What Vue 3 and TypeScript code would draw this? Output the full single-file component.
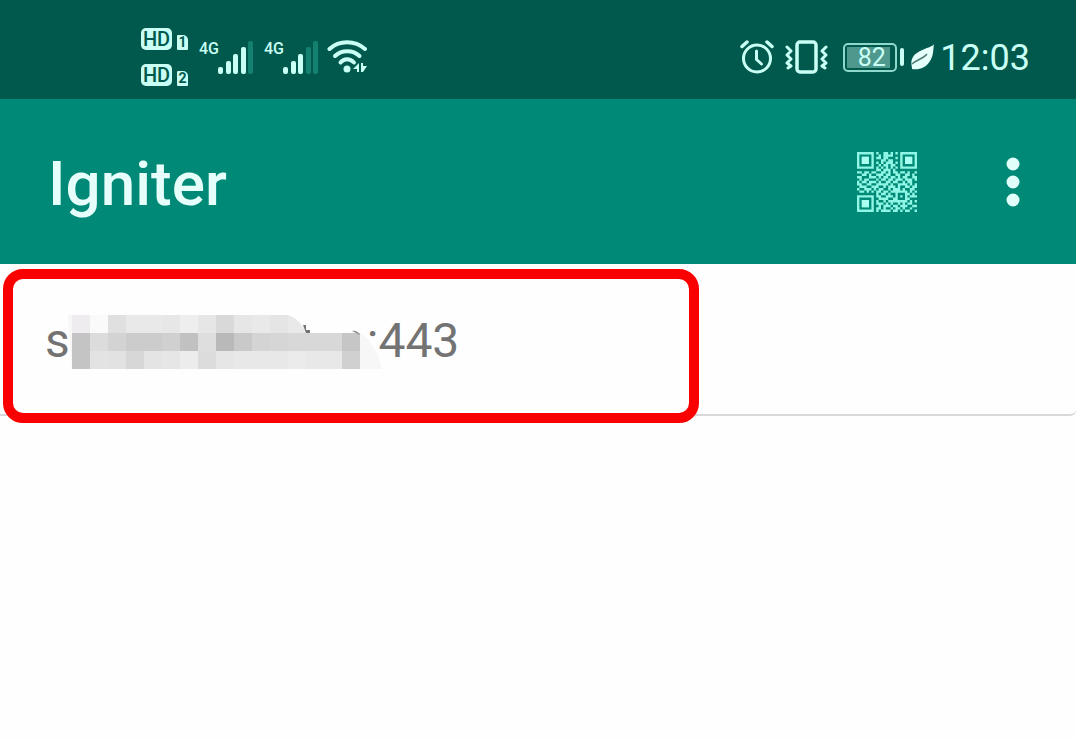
<script setup lang="ts">
interface Cell {
  x: number
  y: number
  fill: string
}

const sims: number[] = [1, 2]

const networks = [
  { id: 1, strength: 4 },
  { id: 2, strength: 3 },
]

const signalBars = [
  { x: 0, h: 7 },
  { x: 8, h: 13 },
  { x: 15, h: 20 },
  { x: 23, h: 27 },
  { x: 30, h: 33 },
]

const qrRows: string[] = [
  '1111111010011010101111111',
  '1000001001011110001000001',
  '1011101011011000101011101',
  '1011101000110110001011101',
  '1011101010101110101011101',
  '1000001001011011001000001',
  '1111111010101010101111111',
  '0000000011011101000000000',
  '1101101100110101101101001',
  '0011010011101100110011010',
  '1100011101011011010110011',
  '0101100010110110111011101',
  '1011011101001101100101100',
  '1100110011111010011110101',
  '0111001110010111010011011',
  '1001110101100101110100110',
  '0110101011011011111110101',
  '0000000010110100100011010',
  '1111111011001110101010111',
  '1000001001111001100011000',
  '1011101010010111111110101',
  '1011101011101010010101100',
  '1011101001011101101110011',
  '1000001011010010110100100',
  '1111111010111101101011001',
]

const qrPath: string = qrRows
  .map((row, y) =>
    [...row].map((bit, x) => (bit === '1' ? `M${x} ${y}h1v1h-1z` : '')).join(''),
  )
  .join('')

const shades: string[][] = [
  ['eeecee', 'fafafa', 'e0e0e0', 'e9e9e9', 'e9e9e9', 'e7e7e7', 'eeeeee', 'e6e6e6', 'd9d9d9', 'e6e6e6', 'e9e9e9', 'e5e5e5'],
  ['c4c4c4', 'dcdcdc', 'd3d3d3', 'cccccc', 'cccccc', 'd0d0d0', 'c1c1c1', 'dedede', 'b9b9b9', 'c9c9c9', 'd4d4d4', 'd6d6d6', 'd8d8d8', 'd8d8d8', 'd8d8d8', 'c6c6c6'],
  ['c4c4c4', 'e3e3e3', 'e2e2e2', 'd7d7d7', 'e4e4e4', 'e6e6e6', 'ececec', 'dcdcdc', 'e6e6e6', 'e8e8e8', 'e8e8e8', 'e8e8e8', 'ebebeb', 'e8e8e8', 'e8e8e8', 'd0d0d0'],
]

const cells: Cell[] = shades.flatMap((row, r) =>
  row.map((shade, c) => ({ x: 6 + c * 18, y: r * 18, fill: `#${shade}` })),
)
</script>

<template>
  <div class="screen">
    <header class="status">
      <div class="group">
        <div class="sims">
          <div v-for="sim in sims" :key="sim" class="sim">
            <span class="hd">HD</span>
            <span class="slot">{{ sim }}</span>
          </div>
        </div>
        <div v-for="net in networks" :key="net.id" class="network">
          <span class="gen">4G</span>
          <svg class="bars" width="36" height="33" viewBox="0 0 36 33" aria-hidden="true">
            <rect
              v-for="(bar, i) in signalBars"
              :key="i"
              :x="bar.x"
              :y="33 - bar.h"
              width="5"
              :height="bar.h"
              rx="2"
              :class="{ dim: i >= net.strength }"
            />
          </svg>
        </div>
        <svg class="wifi" width="41" height="34" viewBox="0 0 41 34" aria-hidden="true">
          <g fill="none" stroke="#c9fff5" stroke-width="4" stroke-linecap="round">
            <path d="M2.500 9C12 0 28 0 38 9" />
            <path d="M8 16C14.500 9.500 26 9.500 32.500 16" />
            <path d="M13.500 22.500C17 18 23 18 27 22.500" />
          </g>
          <circle cx="20" cy="29" r="3.500" fill="#c9fff5" />
          <path d="M32 23v9h-2v-3h-4zM34 23h2v3h4l-4 6h-2z" fill="#c9fff5" />
        </svg>
      </div>

      <div class="group">
        <svg width="34" height="34" viewBox="0 0 34 34" aria-hidden="true">
          <g fill="none" stroke="#c9fff5" stroke-linecap="round" stroke-linejoin="round">
            <circle cx="17" cy="18.500" r="13.500" stroke-width="3" />
            <path d="M16.500 11v8.500l5 4.500" stroke-width="3" />
            <path d="M2 6.500L7 2M27 2l5 4.500" stroke-width="3.500" />
          </g>
        </svg>
        <svg class="vibrate" width="44" height="34" viewBox="0 0 44 34" aria-hidden="true">
          <g fill="none" stroke="#c9fff5" stroke-linejoin="round" stroke-linecap="round">
            <rect x="12" y="2" width="19" height="30" rx="3" stroke-width="3.500" />
            <path d="M2 7l4 4-4 4 4 4-4 4 4 3-3 2M41 7l-4 4 4 4-4 4 4 4-4 3 3 2" stroke-width="3" />
          </g>
        </svg>
        <div class="battery"><span class="level">82</span></div>
        <span class="tip"></span>
        <svg class="leaf" width="24" height="26" viewBox="0 0 24 26" aria-hidden="true">
          <path d="M23 0C21 4 7 5 2 13c-3 5-1 8-1 12 7 1 14-1 18-8 4-6 3-12 4-17z" fill="#e6fffb" />
          <path d="M1 20C5 16 12 15 16 10" fill="none" stroke="#4d7a72" stroke-width="1.500" />
        </svg>
        <time class="clock">12:03</time>
      </div>
    </header>

    <nav class="toolbar">
      <h1>Igniter</h1>
      <div class="actions">
        <button type="button" aria-label="Scan QR code">
          <svg width="60" height="60" viewBox="0 0 25 25" aria-hidden="true">
            <path :d="qrPath" fill="#8ff5e4" />
            <path d="M2 2h3v3H2zM20 2h3v3h-3zM2 20h3v3H2z" fill="#a9fff0" />
          </svg>
        </button>
        <button type="button" aria-label="More options">
          <svg width="14" height="50" viewBox="0 0 14 50" aria-hidden="true">
            <g fill="#e0fffa">
              <circle cx="7" cy="7" r="6.500" />
              <circle cx="7" cy="25" r="6.500" />
              <circle cx="7" cy="43" r="6.500" />
            </g>
          </svg>
        </button>
      </div>
    </nav>

    <main>
      <button type="button" class="server">
        <span>s</span>
        <svg class="mosaic" width="316" height="54" viewBox="0 0 316 54" aria-hidden="true">
          <path d="M2 0h220l20 18h52q16 10 22 36H6z" fill="#f7f7f7" />
          <path d="M222 0q12 4 18 18h-18z" fill="#e9e9e9" />
          <rect
            v-for="(cell, i) in cells"
            :key="i"
            :x="cell.x"
            :y="cell.y"
            width="18"
            height="18"
            :fill="cell.fill"
            shape-rendering="crispEdges"
          />
          <path d="M237 10h3v5h4v3h-4z" fill="#737373" />
          <path d="M286 16q5-1 8 4l-4-2z" fill="#8a8a8a" />
        </svg>
        <span>:443</span>
      </button>
      <div class="highlight"></div>
    </main>
  </div>
</template>

<style>
body {
  margin: 0;
  background: #fefefe;
}
</style>

<style scoped>
.screen {
  min-height: 100vh;
  font-family: Roboto, "Liberation Sans", sans-serif;
  background: #fefefe;
}

button {
  margin: 0;
  padding: 0;
  border: 0;
  background: none;
  font: inherit;
  color: inherit;
  cursor: pointer;
}

svg {
  display: block;
  flex: none;
}

.status {
  display: flex;
  justify-content: space-between;
  box-sizing: border-box;
  height: 99px;
  padding: 0 46px 0 141px;
  background: #00594c;
  color: #c9fff5;
}

.group {
  display: flex;
  align-items: center;
  padding-top: 15px;
}

.sims {
  display: grid;
  gap: 14px;
}

.sim {
  display: flex;
  align-items: flex-end;
  gap: 5px;
  color: #00594c;
}

.hd {
  width: 31px;
  border-radius: 5px;
  background: #c9fff5;
  font-size: 20px;
  font-weight: 500;
  line-height: 22px;
  text-align: center;
}

.slot {
  width: 11px;
  border-radius: 1px 5px 1px 1px;
  background: #c9fff5;
  font-size: 14px;
  font-weight: 700;
  line-height: 15px;
  text-align: center;
}

.network {
  display: flex;
  align-items: flex-start;
  width: 54px;
  margin-left: 11px;
}

.gen {
  width: 19px;
  font-size: 16px;
  font-weight: 500;
  line-height: 16px;
}

.bars {
  fill: #c9fff5;
}

.bars .dim {
  fill: #14806f;
}

.wifi {
  margin-left: 9px;
}

.vibrate {
  margin-left: 11px;
}

.battery {
  box-sizing: border-box;
  width: 54px;
  height: 29px;
  margin-left: 14px;
  padding: 2px;
  border: 2px solid #8fd8cc;
  border-radius: 5px;
}

.level {
  display: block;
  width: 43px;
  padding-left: 6px;
  box-sizing: border-box;
  background: #4f988d;
  font-size: 25px;
  line-height: 21px;
  text-align: center;
}

.tip {
  width: 4px;
  height: 18px;
  margin-left: 3px;
  border-radius: 2px;
  background: #c9fff5;
}

.leaf {
  margin-left: 7px;
}

.clock {
  margin-left: 5px;
  padding-top: 2px;
  font-size: 36px;
  line-height: 42px;
}

.toolbar {
  display: flex;
  align-items: center;
  justify-content: space-between;
  box-sizing: border-box;
  height: 165px;
  padding: 0 56px 0 48px;
  background: #008977;
}

h1 {
  margin: 0;
  padding-top: 4px;
  color: #e6fffb;
  font-size: 62px;
  font-weight: 500;
  line-height: 72px;
}

.actions {
  display: flex;
  align-items: center;
  gap: 89px;
}

main {
  position: relative;
}

.server {
  display: flex;
  align-items: center;
  box-sizing: border-box;
  width: 100%;
  height: 152px;
  padding: 4px 0 0 45px;
  border-bottom: 2px solid #d8d8d8;
  border-radius: 0 0 6px 0;
  color: #737373;
  font-size: 48px;
  line-height: 56px;
}

.mosaic {
  position: relative;
  margin: 2px -15px 0 -4px;
}

.highlight {
  position: absolute;
  top: 5px;
  left: 3px;
  box-sizing: border-box;
  width: 65%;
  max-width: 696px;
  height: 154px;
  border: 10px solid #fb0000;
  border-radius: 20px;
  pointer-events: none;
}
</style>
